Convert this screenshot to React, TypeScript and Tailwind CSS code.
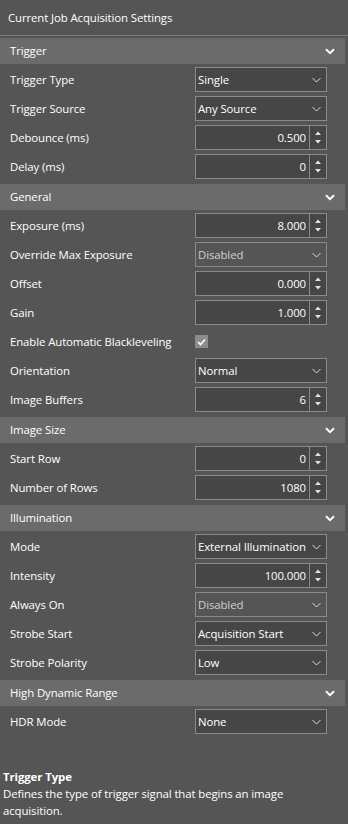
import React from "react";

type Row =
  | { label: string; kind: "select"; value: string; disabled?: boolean }
  | { label: string; kind: "spin"; value: string }
  | { label: string; kind: "check" };

type Section = { title: string; rows: Row[] };

const sections: Section[] = [
  {
    title: "Trigger",
    rows: [
      { label: "Trigger Type", kind: "select", value: "Single" },
      { label: "Trigger Source", kind: "select", value: "Any Source" },
      { label: "Debounce (ms)", kind: "spin", value: "0.500" },
      { label: "Delay (ms)", kind: "spin", value: "0" },
    ],
  },
  {
    title: "General",
    rows: [
      { label: "Exposure (ms)", kind: "spin", value: "8.000" },
      { label: "Override Max Exposure", kind: "select", value: "Disabled", disabled: true },
      { label: "Offset", kind: "spin", value: "0.000" },
      { label: "Gain", kind: "spin", value: "1.000" },
      { label: "Enable Automatic Blackleveling", kind: "check" },
      { label: "Orientation", kind: "select", value: "Normal" },
      { label: "Image Buffers", kind: "spin", value: "6" },
    ],
  },
  {
    title: "Image Size",
    rows: [
      { label: "Start Row", kind: "spin", value: "0" },
      { label: "Number of Rows", kind: "spin", value: "1080" },
    ],
  },
  {
    title: "Illumination",
    rows: [
      { label: "Mode", kind: "select", value: "External Illumination" },
      { label: "Intensity", kind: "spin", value: "100.000" },
      { label: "Always On", kind: "select", value: "Disabled", disabled: true },
      { label: "Strobe Start", kind: "select", value: "Acquisition Start" },
      { label: "Strobe Polarity", kind: "select", value: "Low" },
    ],
  },
  {
    title: "High Dynamic Range",
    rows: [{ label: "HDR Mode", kind: "select", value: "None" }],
  },
];

function SmallChevron() {
  return (
    <svg width="9" height="6" viewBox="0 0 9 6" className="shrink-0">
      <path d="M0.5 1 L4.5 5 L8.5 1" fill="none" stroke="#d8d8d8" strokeWidth="1" />
    </svg>
  );
}

function HeaderChevron() {
  return (
    <svg width="10" height="7" viewBox="0 0 10 7" className="shrink-0">
      <path d="M1 1.2 L5 5.2 L9 1.2" fill="none" stroke="#ffffff" strokeWidth="2" />
    </svg>
  );
}

function Select({ value, disabled }: { value: string; disabled?: boolean }) {
  return (
    <div
      className={`flex items-center justify-between w-[132px] h-[25px] border border-[#8a8a8a] pl-[2px] pr-[5px] ${
        disabled ? "bg-[#555555] text-[#cfcfcf]" : "bg-[#464646] text-white"
      }`}
    >
      <span className="whitespace-nowrap">{value}</span>
      <SmallChevron />
    </div>
  );
}

function Spin({ value }: { value: string }) {
  return (
    <div className="flex w-[132px] h-[25px] border border-[#8a8a8a] bg-[#464646] text-white">
      <div className="flex-1 flex items-center justify-end pr-[3px]">{value}</div>
      <div className="w-[17px] border-l border-[#8a8a8a] flex flex-col items-center justify-center gap-[5px]">
        <svg width="6" height="4" viewBox="0 0 6 4">
          <path d="M0 4 L3 0.5 L6 4 Z" fill="#e0e0e0" />
        </svg>
        <svg width="6" height="4" viewBox="0 0 6 4">
          <path d="M0 0 L3 3.5 L6 0 Z" fill="#e0e0e0" />
        </svg>
      </div>
    </div>
  );
}

function Check() {
  return (
    <div className="w-[13px] h-[13px] bg-[#8c8c8c] flex items-center justify-center">
      <svg width="9" height="8" viewBox="0 0 9 8">
        <path d="M1 4 L3.5 6.5 L8 1.5" fill="none" stroke="#ffffff" strokeWidth="1.6" />
      </svg>
    </div>
  );
}

function SectionBlock({ section }: { section: Section }) {
  return (
    <div>
      <div className="flex items-center justify-between h-[26px] w-[345px] bg-[#6b6b6b] pl-[10px] pr-[10px] text-white">
        <span>{section.title}</span>
        <HeaderChevron />
      </div>
      <div className="pt-[1px] pb-[3px]">
        {section.rows.map((row) => (
          <div key={row.label} className="flex items-center h-[29px] pl-[10px]">
            <span className="w-[185px] text-white">{row.label}</span>
            {row.kind === "select" && <Select value={row.value} disabled={row.disabled} />}
            {row.kind === "spin" && <Spin value={row.value} />}
            {row.kind === "check" && <Check />}
          </div>
        ))}
      </div>
    </div>
  );
}

export default function App() {
  return (
    <div
      className="w-[348px] h-[824px] bg-[#555555] flex flex-col overflow-hidden text-[11.4px] leading-[16px] tracking-[-0.1px]"
      style={{ fontFamily: '"Segoe UI", "Open Sans", sans-serif' }}
    >
      <div className="h-[35px] flex items-center pl-[8px] text-white">Current Job Acquisition Settings</div>
      <div className="h-px bg-[#7a7a7a]" />
      <div className="h-[2px]" />
      {sections.map((s) => (
        <SectionBlock key={s.title} section={s} />
      ))}
      <div className="mt-auto px-[3px] pb-[5px] text-white leading-[17px]">
        <div className="font-bold">Trigger Type</div>
        <div>Defines the type of trigger signal that begins an image acquisition.</div>
      </div>
    </div>
  );
}
